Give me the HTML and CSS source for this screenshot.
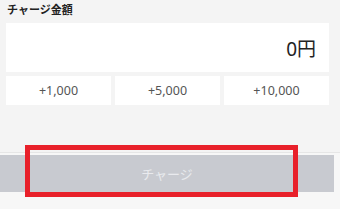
FILE: index.html
```html
<!DOCTYPE html>
<html lang="ja">
<head>
    <meta charset="UTF-8">
    <meta name="viewport" content="width=device-width, initial-scale=1.0">
    <title>チャージ</title>
    <link rel="stylesheet" href="styles.css">
</head>
<body>
    <div class="charge">
        <div class="charge-label">チャージ金額</div>
        <div class="charge-amount">0円</div>
        <div class="presets">
            <button class="preset">+1,000</button>
            <button class="preset">+5,000</button>
            <button class="preset">+10,000</button>
        </div>
        <div class="footer">
            <button class="submit" disabled>チャージ</button>
            <div class="highlight"></div>
        </div>
    </div>
</body>
</html>
```

FILE: styles.css
```css
* {
    margin: 0;
    padding: 0;
    box-sizing: border-box;
    font-family: "Noto Sans CJK JP", "Noto Sans", sans-serif;
}

body {
    width: 340px;
    height: 209px;
    background-color: #f4f4f4;
    overflow: hidden;
}

.charge-label {
    height: 23px;
    padding: 2px 0 0 7px;
    font-size: 11px;
    font-weight: bold;
    line-height: 14px;
    color: #222;
}

.charge-amount {
    height: 49px;
    margin: 0 11px 0 6px;
    padding-right: 13px;
    background-color: #fff;
    display: flex;
    justify-content: flex-end;
    align-items: center;
    font-family: "Noto Sans", "Noto Sans CJK JP", sans-serif;
    font-size: 19px;
    color: #222;
}

.presets {
    display: grid;
    grid-template-columns: repeat(3, 1fr);
    gap: 4px;
    margin: 4px 11px 0 6px;
}

.preset {
    height: 29px;
    border: none;
    background-color: #fff;
    font-family: "Noto Sans", sans-serif;
    font-size: 12.5px;
    color: #555;
}

.footer {
    position: relative;
    margin-top: 47px;
    border-top: 1px solid #e6e6e6;
    padding-top: 2px;
    background-color: #f7f7f7;
    height: 57px;
}

.submit {
    display: block;
    width: 334px;
    height: 37px;
    border: none;
    background-color: #c8cad0;
    color: #e9eaee;
    font-size: 13px;
}

.highlight {
    position: absolute;
    left: 25px;
    top: -8px;
    width: 273px;
    height: 52px;
    border: 5px solid #e8202a;
}
```
